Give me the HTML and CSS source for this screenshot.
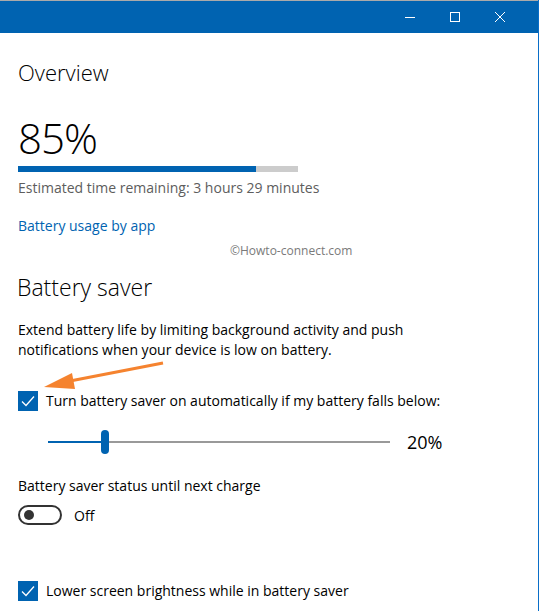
FILE: index.html
```html
<!DOCTYPE html>
<html>
<head>
<meta charset="utf-8">
<link rel="stylesheet" href="styles.css">
</head>
<body>
<div class="window">
  <div class="titlebar">
    <span class="tb-btn">
      <svg width="12" height="12" viewBox="0 0 12 12"><path d="M1 6.5h10" stroke="#fff" stroke-width="1"/></svg>
    </span>
    <span class="tb-btn">
      <svg width="12" height="12" viewBox="0 0 12 12"><rect x="1.5" y="1.5" width="9" height="9" fill="none" stroke="#fff" stroke-width="1"/></svg>
    </span>
    <span class="tb-btn">
      <svg width="12" height="12" viewBox="0 0 12 12"><path d="M1 1L11 11M11 1L1 11" stroke="#fff" stroke-width="1"/></svg>
    </span>
  </div>
  <div class="content">
    <h2 class="h-overview">Overview</h2>
    <div class="big-pct">85%</div>
    <div class="bar"><div class="bar-fill" style="width:85%"></div></div>
    <p class="muted">Estimated time remaining: 3 hours 29 minutes</p>
    <a class="link">Battery usage by app</a>
    <div class="watermark">©Howto-connect.com</div>
    <h2 class="h-saver">Battery saver</h2>
    <p class="desc">Extend battery life by limiting background activity and push notifications when your device is low on battery.</p>
    <label class="check">
      <span class="box"><svg width="20" height="20" viewBox="0 0 20 20"><path d="M4 10.5l4 4 8-9" fill="none" stroke="#fff" stroke-width="1.3"/></svg></span>
      <span>Turn battery saver on automatically if my battery falls below:</span>
    </label>
    <div class="slider-row">
      <div class="slider">
        <div class="track-fill"></div>
        <div class="thumb"></div>
        <div class="track-rest"></div>
      </div>
      <span class="slider-val">20%</span>
    </div>
    <p class="status-label">Battery saver status until next charge</p>
    <div class="toggle-row">
      <span class="toggle"><span class="knob"></span></span>
      <span>Off</span>
    </div>
    <label class="check check-2">
      <span class="box"><svg width="20" height="20" viewBox="0 0 20 20"><path d="M4 10.5l4 4 8-9" fill="none" stroke="#fff" stroke-width="1.3"/></svg></span>
      <span>Lower screen brightness while in battery saver</span>
    </label>
  </div>
  <svg class="arrow" width="539" height="611" viewBox="0 0 539 611">
    <path d="M163 363L70 381" stroke="#f5832f" stroke-width="3" fill="none"/>
    <path d="M44 387L72 373L75 389Z" fill="#f5832f"/>
  </svg>
</div>
</body>
</html>
```

FILE: styles.css
```css
html, body {
  margin: 0;
  padding: 0;
  background: #fff;
}
body {
  font-family: "Open Sans", "Noto Sans", sans-serif;
  color: #000;
  width: 539px;
  height: 611px;
  overflow: hidden;
}
.window {
  position: relative;
  width: 538px;
  height: 611px;
  border-right: 1px solid #0a6ec8;
  box-sizing: content-box;
}
.titlebar {
  height: 32px;
  border-top: 1px solid #aaaaaa;
  background: #0063b1;
  display: flex;
  justify-content: flex-end;
  padding-right: 16px;
}
.tb-btn {
  width: 45px;
  height: 32px;
  display: flex;
  align-items: center;
  justify-content: center;
}
.content {
  padding-left: 18px;
}
.h-overview {
  margin: 0;
  padding-top: 25px;
  font-size: 22px;
  font-weight: 300;
  line-height: 28px;
}
.big-pct {
  margin-top: 28px;
  font-size: 42px;
  font-weight: 300;
  line-height: 48px;
  letter-spacing: -1px;
}
.bar {
  margin-top: 4px;
  width: 280px;
  height: 6px;
  background: #cccccc;
}
.bar-fill {
  height: 100%;
  background: #0063b1;
}
.muted {
  margin: 6px 0 0;
  font-size: 14px;
  line-height: 20px;
  color: #5d5d5d;
}
.link {
  display: block;
  margin-top: 18px;
  font-size: 14px;
  line-height: 20px;
  color: #0063b1;
}
.watermark {
  margin: 6px 0 0 212px;
  font-size: 12px;
  line-height: 18px;
  color: #7a7a7a;
}
.h-saver {
  margin: 11px 0 0 -1px;
  font-size: 23px;
  font-weight: 300;
  line-height: 32px;
}
.desc {
  margin: 17px 0 0;
  width: 420px;
  font-size: 14px;
  line-height: 20px;
  color: #000;
}
.check {
  display: flex;
  align-items: center;
  gap: 8px;
  margin-top: 31px;
  font-size: 14px;
  line-height: 20px;
}
.box {
  width: 20px;
  height: 20px;
  background: #0063b1;
  flex: none;
  display: block;
}
.box svg { display: block; }
.slider-row {
  display: flex;
  align-items: center;
  margin: 19px 0 0 30px;
  height: 24px;
}
.slider {
  display: flex;
  align-items: center;
  width: 342px;
  height: 24px;
}
.track-fill {
  width: 53px;
  height: 2px;
  background: #0063b1;
}
.thumb {
  width: 8px;
  height: 24px;
  border-radius: 4px;
  background: #0063b1;
}
.track-rest {
  flex: 1;
  height: 2px;
  background: #999999;
}
.slider-val {
  margin-left: 17px;
  font-size: 18px;
  color: #000;
}
.status-label {
  margin: 22px 0 0;
  font-size: 14px;
  line-height: 20px;
}
.toggle-row {
  display: flex;
  align-items: center;
  gap: 12px;
  margin-top: 9px;
  font-size: 14px;
}
.toggle {
  width: 44px;
  height: 20px;
  border: 2px solid #333;
  border-radius: 10px;
  box-sizing: border-box;
  display: flex;
  align-items: center;
  padding-left: 4px;
}
.knob {
  width: 10px;
  height: 10px;
  border-radius: 50%;
  background: #333;
}
.check-2 {
  margin-top: 56px;
}
.arrow {
  position: absolute;
  left: 0;
  top: 0;
  pointer-events: none;
}
```
